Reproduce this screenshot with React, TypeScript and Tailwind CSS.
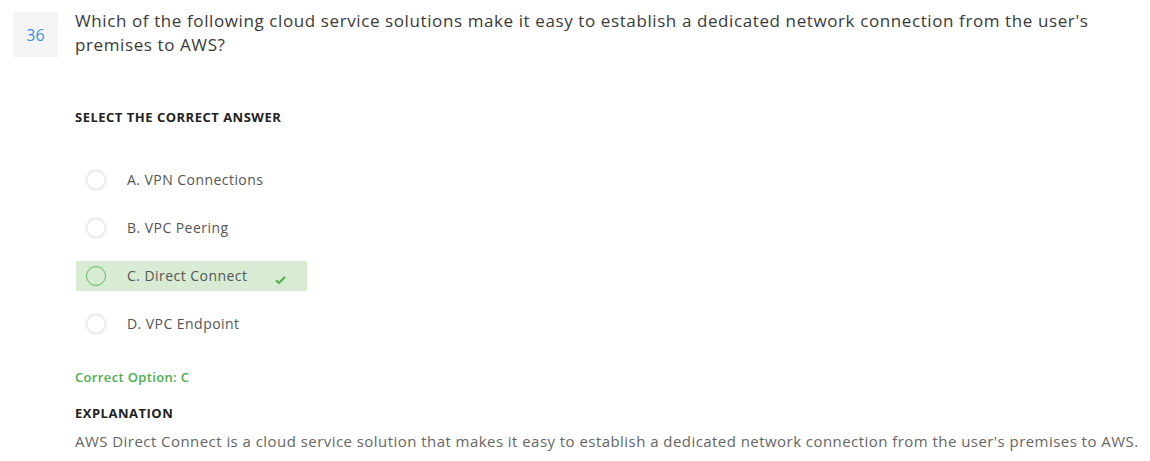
import React from "react";

const font = { fontFamily: '"Open Sans", "Liberation Sans", sans-serif' };

function Radio({ active }: { active?: boolean }) {
  return (
    <span
      className={
        "block w-[20px] h-[20px] shrink-0 rounded-full border " +
        (active ? "border-[#5cb85c] bg-transparent" : "border-[#dcdcdc] bg-white")
      }
    />
  );
}

function Option({ label, correct }: { label: string; correct?: boolean }) {
  return (
    <div className="flex h-[48px] items-center">
      <div
        className={
          "flex h-[30px] w-[231px] items-center pl-[10px] " +
          (correct ? "bg-[#d8ecd3]" : "")
        }
      >
        <Radio active={correct} />
        <span className="ml-[21px] mb-[2px] text-[14px] text-[#555] tracking-[0.45px]">{label}</span>
        {correct && (
          <svg className="ml-auto mr-[21px] mt-[8px]" width="11" height="8" viewBox="0 0 11 8">
            <path d="M1 4.2 L4 7 L10 1" fill="none" stroke="#4cae4c" strokeWidth="2" />
          </svg>
        )}
      </div>
    </div>
  );
}

export default function App() {
  return (
    <div className="w-[1150px] h-[461px] bg-white overflow-hidden" style={font}>
      <div className="flex pt-[12px] pl-[13px]">
        <div className="flex h-[45px] w-[45px] items-center justify-center bg-[#f4f4f4] text-[16px] text-[#3d8fe6]">
          36
        </div>
        <div className="ml-[17px] mt-[-3px] w-[1060px] text-[17px] leading-[24px] text-[#3a3a3a] tracking-[0.6px]">
          Which of the following cloud service solutions make it easy to establish a dedicated network connection from the user's premises to AWS?
        </div>
      </div>
      <div className="pl-[75px]">
        <div className="mt-[51px] text-[13px] font-bold text-[#222] leading-[18px] tracking-[0.5px]">SELECT THE CORRECT ANSWER</div>
        <div className="mt-[30px] ml-[1px]">
          <Option label="A. VPN Connections" />
          <Option label="B. VPC Peering" />
          <Option label="C. Direct Connect" correct />
          <Option label="D. VPC Endpoint" />
        </div>
        <div className="mt-[20px] text-[13px] font-semibold text-[#4cae4c] leading-[18px] tracking-[0.35px]">Correct Option: C</div>
        <div className="mt-[18px] text-[13px] font-bold text-[#222] leading-[18px] tracking-[0.5px]">EXPLANATION</div>
        <div className="mt-[8px] text-[15px] text-[#666] leading-[22px] tracking-[0.45px]">
          AWS Direct Connect is a cloud service solution that makes it easy to establish a dedicated network connection from the user's premises to AWS.
        </div>
      </div>
    </div>
  );
}
